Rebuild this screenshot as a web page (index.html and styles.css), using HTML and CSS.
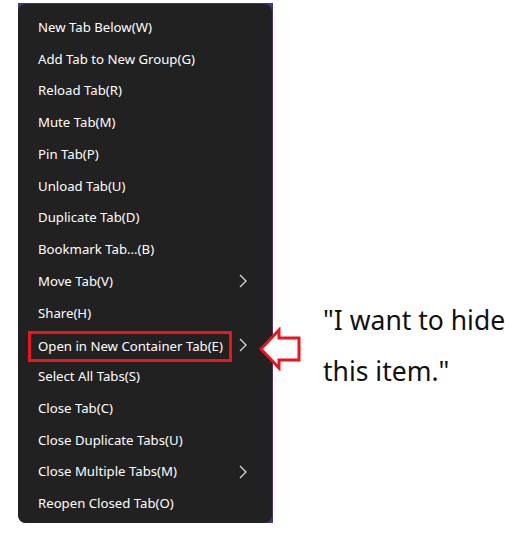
FILE: index.html
```html
<!DOCTYPE html>
<html lang="en">
<head>
    <meta charset="UTF-8">
    <meta name="viewport" content="width=device-width, initial-scale=1.0">
    <title>Tab Context Menu</title>
    <link rel="stylesheet" href="styles.css">
</head>
<body>
    <div class="page">
        <div class="menu-frame">
            <ul class="menu">
                <li class="menu-item">New Tab Below(W)</li>
                <li class="menu-item">Add Tab to New Group(G)</li>
                <li class="menu-item">Reload Tab(R)</li>
                <li class="menu-item">Mute Tab(M)</li>
                <li class="menu-item">Pin Tab(P)</li>
                <li class="menu-item">Unload Tab(U)</li>
                <li class="menu-item">Duplicate Tab(D)</li>
                <li class="menu-item">Bookmark Tab...(B)</li>
                <li class="menu-item">Move Tab(V)
                    <svg class="chevron" width="8" height="14" viewBox="0 0 8 14"><path d="M1 1 L7 7 L1 13" /></svg>
                </li>
                <li class="menu-item">Share(H)</li>
                <li class="menu-item marked-row">
                    <span class="marked">Open in New Container Tab(E)</span>
                    <svg class="chevron" width="8" height="14" viewBox="0 0 8 14"><path d="M1 1 L7 7 L1 13" /></svg>
                    <svg class="pointer" width="42" height="44" viewBox="0 0 42 44">
                        <polygon points="2,22 20,3 20,11 40,11 40,33 20,33 20,41" />
                    </svg>
                </li>
                <li class="menu-item">Select All Tabs(S)</li>
                <li class="menu-item">Close Tab(C)</li>
                <li class="menu-item">Close Duplicate Tabs(U)</li>
                <li class="menu-item">Close Multiple Tabs(M)
                    <svg class="chevron" width="8" height="14" viewBox="0 0 8 14"><path d="M1 1 L7 7 L1 13" /></svg>
                </li>
                <li class="menu-item">Reopen Closed Tab(O)</li>
            </ul>
        </div>

        <p class="note">"I want to hide<br>this item."</p>
    </div>
</body>
</html>
```

FILE: styles.css
```css
body {
    margin: 0;
    background-color: white;
    font-family: "Noto Sans", "Open Sans", sans-serif;
}
.page {
    display: flex;
    align-items: flex-start;
    padding: 3px 0 0 18px;
}
.menu-frame {
    background-color: #4a3178;
    padding: 1px 1px 0 0;
    border-bottom-left-radius: 8px;
}
.menu {
    list-style: none;
    margin: 0;
    padding: 7px 0 4px 0;
    width: 254px;
    background-color: #212121;
    border-radius: 8px;
}
.menu-item {
    position: relative;
    display: flex;
    align-items: center;
    height: 31.75px;
    padding-left: 20px;
    color: #ffffff;
    font-size: 13.2px;
}
.chevron {
    position: absolute;
    left: 221px;
    top: 9px;
}
.chevron path {
    fill: none;
    stroke: #d8d8d8;
    stroke-width: 1.3;
}
.marked-row {
    padding-left: 10px;
}
.marked {
    display: inline-block;
    border: 3px solid #e8161e;
    padding: 2px 6px 2px 7px;
    line-height: 21px;
    margin-top: 5px;
}
.pointer {
    position: absolute;
    left: 241px;
    top: -2px;
}
.pointer polygon {
    fill: white;
    stroke: #e8161e;
    stroke-width: 3;
    stroke-linejoin: miter;
}
.note {
    margin: 292px 0 0 50px;
    font-size: 26.5px;
    line-height: 51px;
    color: #111;
}
```
